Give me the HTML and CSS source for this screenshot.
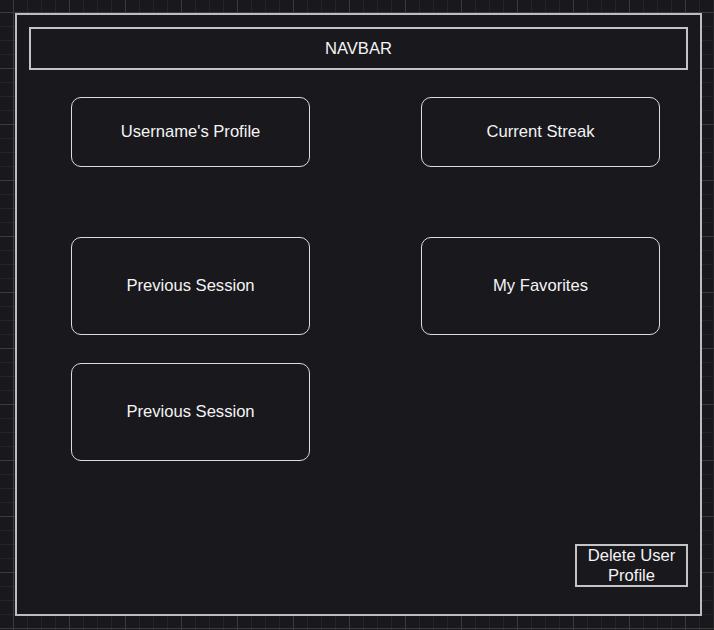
FILE: index.html
```html
<!DOCTYPE html>
<html lang="en">
<head>
<meta charset="utf-8">
<title>Profile wireframe</title>
<link rel="stylesheet" href="styles.css">
</head>
<body>
<div class="frame">
  <div class="navbar">NAVBAR</div>
  <div class="top-row">
    <div class="card card-short">Username's Profile</div>
    <div class="card card-short">Current Streak</div>
  </div>
  <div class="grid">
    <div class="card">Previous Session</div>
    <div class="card">My Favorites</div>
    <div class="card">Previous Session</div>
  </div>
  <div class="delete">Delete User<br>Profile</div>
</div>
</body>
</html>
```
FILE: styles.css
```css
* { box-sizing: border-box; }
html, body { margin: 0; padding: 0; }
body {
  width: 714px;
  height: 630px;
  overflow: hidden;
  font-family: "Liberation Sans", Arial, sans-serif;
  color: #f4f4f4;
  background-color: #19181d;
  background-image:
    linear-gradient(to right, #3b3b3e 1px, transparent 1px),
    linear-gradient(to bottom, #3b3b3e 1px, transparent 1px),
    linear-gradient(to right, #252429 1px, transparent 1px),
    linear-gradient(to bottom, #252429 1px, transparent 1px);
  background-size: 56px 56px, 56px 56px, 14px 14px, 14px 14px;
  background-position: 13px 12px, 13px 12px, 13px 12px, 13px 12px;
  padding-top: 13px;
  padding-left: 15px;
}
.frame {
  width: 687px;
  height: 603px;
  border: 2px solid #bdbdbf;
  background: #19181d;
  padding: 12px;
  display: flex;
  flex-direction: column;
}
.navbar {
  height: 43px;
  border: 2px solid #c4c4c6;
  display: flex;
  align-items: center;
  justify-content: center;
  font-size: 16.6px;
}
.top-row {
  display: grid;
  grid-template-columns: 239px 239px;
  column-gap: 111px;
  margin-top: 27px;
  padding-left: 42px;
}
.grid {
  display: grid;
  grid-template-columns: 239px 239px;
  grid-template-rows: 98px 98px;
  column-gap: 111px;
  row-gap: 28px;
  margin-top: 70px;
  padding-left: 42px;
}
.card {
  border: 1px solid #dcdcde;
  border-radius: 10px;
  display: flex;
  align-items: center;
  justify-content: center;
  font-size: 16.6px;
  height: 98px;
}
.card-short { height: 70px; }
.delete {
  margin-top: auto;
  align-self: flex-end;
  width: 113px;
  height: 43px;
  margin-bottom: 15px;
  border: 2px solid #c4c4c6;
  display: flex;
  align-items: center;
  justify-content: center;
  text-align: center;
  font-size: 16.6px;
  line-height: 20px;
}
```
